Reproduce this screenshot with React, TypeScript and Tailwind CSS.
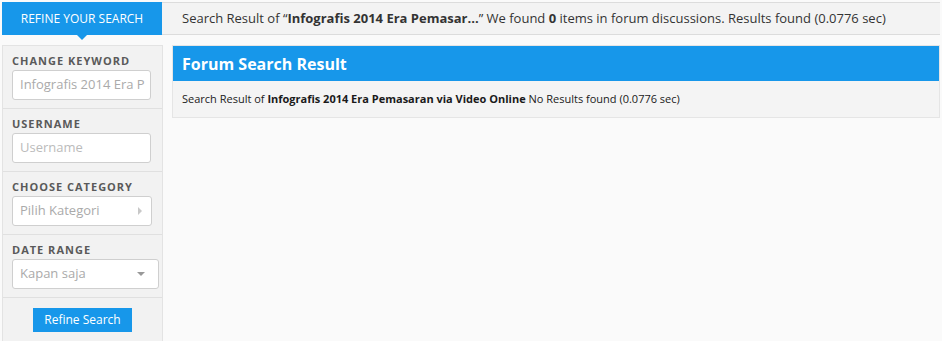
import React from "react";

const BLUE = "bg-[#1797ea]";

function Field({ label, children }: { label: string; children: React.ReactNode }) {
  return (
    <div className="border-b border-[#e0e0e0] px-[9px] pt-[8px] pb-[8px]">
      <div className="mb-[2px] h-[14px] text-[11px] font-bold uppercase leading-[14px] tracking-[1px] text-[#5a5a5a]">
        {label}
      </div>
      {children}
    </div>
  );
}

export default function App() {
  return (
    <div className="min-h-screen bg-[#fafafa] px-[2px] pt-[2px] font-['Open_Sans',sans-serif]">
      {/* Top bar */}
      <div className="flex h-[33px] border-y border-[#dcdcdc] bg-[#f3f3f3]">
        <div className={`relative -my-px flex w-[160px] items-center justify-center ${BLUE} text-[12px] text-white`}>
          REFINE YOUR SEARCH
          <span className="absolute left-[75px] top-full h-0 w-0 border-x-[5px] border-t-[5px] border-x-transparent border-t-[#1797ea]" />
        </div>
        <div className="flex items-center pl-[20px] text-[13px] text-[#333]">
          Search Result of “<b>Infografis 2014 Era Pemasar...</b>” We found&nbsp;<b>0</b>&nbsp;items in forum discussions. Results found (0.0776 sec)
        </div>
      </div>

      <div className="mt-[10px] flex gap-[9px]">
        {/* Sidebar */}
        <div className="w-[161px] shrink-0 border border-[#e3e3e3] bg-[#f2f2f2]">
          <Field label="Change Keyword">
            <div className="flex h-[30px] w-[139px] items-center overflow-hidden whitespace-nowrap rounded-[3px] border border-[#cfcfcf] bg-white pl-[7px] text-[13px] text-[#aaa]">
              Infografis 2014 Era P
            </div>
          </Field>
          <Field label="Username">
            <div className="flex h-[30px] w-[139px] items-center rounded-[3px] border border-[#cfcfcf] bg-white pl-[7px] text-[13px] text-[#bbb]">
              Username
            </div>
          </Field>
          <Field label="Choose Category">
            <div className="flex h-[30px] w-[140px] items-center justify-between rounded-[3px] border border-[#cfcfcf] bg-white pl-[7px] pr-[9px] text-[13px] text-[#aaa]">
              Pilih Kategori
              <span className="h-0 w-0 border-y-[4px] border-l-[4px] border-y-transparent border-l-[#c8c8c8]" />
            </div>
          </Field>
          <Field label="Date Range">
            <div className="flex h-[30px] w-[147px] items-center justify-between rounded-[3px] border border-[#cfcfcf] bg-white pl-[7px] pr-[13px] text-[13px] text-[#aaa]">
              Kapan saja
              <span className="h-0 w-0 border-x-[4px] border-t-[4px] border-x-transparent border-t-[#999]" />
            </div>
          </Field>
          <div className="flex justify-center pt-[10px] pb-[10px]">
            <button className={`h-[24px] w-[99px] ${BLUE} text-[12px] text-white`}>Refine Search</button>
          </div>
        </div>

        {/* Main */}
        <div className="flex-1 self-start border border-[#e5e5e5] bg-[#f4f4f4]">
          <div className={`flex h-[35px] items-center ${BLUE} px-[9px] text-[16px] font-bold text-white`}>
            Forum Search Result
          </div>
          <div className="flex h-[36px] items-center px-[9px] text-[11px] text-[#1a1a1a]">
            Search Result of&nbsp;<b>Infografis 2014 Era Pemasaran via Video Online</b>&nbsp;No Results found (0.0776 sec)
          </div>
        </div>
      </div>
    </div>
  );
}
